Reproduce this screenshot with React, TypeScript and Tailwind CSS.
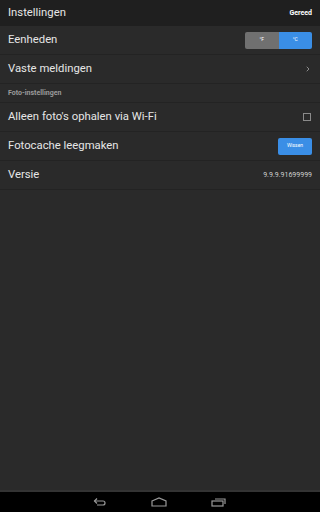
import { ChevronRight } from "lucide-react";

function Row({ label, children }: { label: string; children?: React.ReactNode }) {
  return (
    <div className="flex h-[29px] items-center justify-between border-b border-[#232323] pl-[8px] pr-[8px]">
      <span className="text-[11.3px] text-[#e6e6e6]">{label}</span>
      {children}
    </div>
  );
}

function NavBar() {
  return (
    <div className="flex h-[20px] items-center justify-center gap-[44px] bg-black">
      <svg width="14" height="10" viewBox="0 0 14 10" fill="none" stroke="#9a9a9a" strokeWidth="1.2">
        <path d="M4 1.5 L1.5 4 L4 6.5" />
        <path d="M1.5 4 H10 a2 2 0 0 1 0 4 H4" />
      </svg>
      <svg width="16" height="10" viewBox="0 0 16 10" fill="none" stroke="#9a9a9a" strokeWidth="1.2">
        <path d="M1 4 L8 1 L15 4 V9 H1 Z" />
      </svg>
      <svg width="16" height="10" viewBox="0 0 16 10" fill="none" stroke="#9a9a9a" strokeWidth="1.2">
        <rect x="1" y="4" width="11" height="5" />
        <path d="M4 2 H14 V7" />
      </svg>
    </div>
  );
}

export default function App() {
  return (
    <div className="flex h-[512px] w-[320px] flex-col bg-[#2a2a2a] font-['Roboto',sans-serif]">
      <div className="flex h-[26px] items-center justify-between bg-[#1f1f1f] pl-[8px] pr-[8px]">
        <span className="text-[11.3px] text-[#e6e6e6]">Instellingen</span>
        <span className="text-[7px] font-bold text-white">Gereed</span>
      </div>
      <Row label="Eenheden">
        <div className="flex h-[17px] w-[67px] overflow-hidden rounded-[2px]">
          <div className="flex flex-1 items-center justify-center bg-[#707070] text-[5px] text-white">°F</div>
          <div className="flex flex-1 items-center justify-center bg-[#3a8ee6] text-[5px] text-white">°C</div>
        </div>
      </Row>
      <Row label="Vaste meldingen">
        <ChevronRight size={8} strokeWidth={2} className="text-[#bdbdbd]" />
      </Row>
      <div className="flex h-[19px] items-center border-b border-[#232323] pl-[8px]">
        <span className="text-[7px] font-bold text-[#9a9a9a]">Foto-instellingen</span>
      </div>
      <Row label="Alleen foto's ophalen via Wi-Fi">
        <div className="mr-[1px] h-[8px] w-[8px] border border-[#8a8a8a]" />
      </Row>
      <Row label="Fotocache leegmaken">
        <div className="flex h-[17px] w-[34px] items-center justify-center rounded-[2px] bg-[#3a8ee6] text-[5px] text-white">
          Wissen
        </div>
      </Row>
      <Row label="Versie">
        <span className="text-[7px] text-[#d0d0d0]">9.9.9.91699999</span>
      </Row>
      <div className="flex-1" />
      <div className="h-[2px] bg-[#333333]" />
      <NavBar />
    </div>
  );
}
